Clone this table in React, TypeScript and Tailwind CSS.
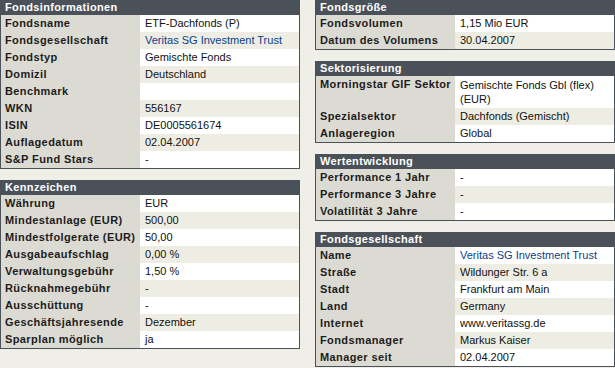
import React from "react";

type Row = { label: string; value: string; link?: boolean; tall?: boolean };

const fondsinfo: Row[] = [
  { label: "Fondsname", value: "ETF-Dachfonds (P)" },
  { label: "Fondsgesellschaft", value: "Veritas SG Investment Trust", link: true },
  { label: "Fondstyp", value: "Gemischte Fonds" },
  { label: "Domizil", value: "Deutschland" },
  { label: "Benchmark", value: "" },
  { label: "WKN", value: "556167" },
  { label: "ISIN", value: "DE0005561674" },
  { label: "Auflagedatum", value: "02.04.2007" },
  { label: "S&P Fund Stars", value: "-" },
];

const kennzeichen: Row[] = [
  { label: "Währung", value: "EUR" },
  { label: "Mindestanlage (EUR)", value: "500,00" },
  { label: "Mindestfolgerate (EUR)", value: "50,00" },
  { label: "Ausgabeaufschlag", value: "0,00 %" },
  { label: "Verwaltungsgebühr", value: "1,50 %" },
  { label: "Rücknahmegebühr", value: "-" },
  { label: "Ausschüttung", value: "-" },
  { label: "Geschäftsjahresende", value: "Dezember" },
  { label: "Sparplan möglich", value: "ja" },
];

const groesse: Row[] = [
  { label: "Fondsvolumen", value: "1,15 Mio EUR" },
  { label: "Datum des Volumens", value: "30.04.2007" },
];

const sektor: Row[] = [
  { label: "Morningstar GIF Sektor", value: "Gemischte Fonds Gbl (flex) (EUR)", tall: true },
  { label: "Spezialsektor", value: "Dachfonds (Gemischt)" },
  { label: "Anlageregion", value: "Global" },
];

const wertentwicklung: Row[] = [
  { label: "Performance 1 Jahr", value: "-" },
  { label: "Performance 3 Jahre", value: "-" },
  { label: "Volatilität 3 Jahre", value: "-" },
];

const gesellschaft: Row[] = [
  { label: "Name", value: "Veritas SG Investment Trust", link: true },
  { label: "Straße", value: "Wildunger Str. 6 a" },
  { label: "Stadt", value: "Frankfurt am Main" },
  { label: "Land", value: "Germany" },
  { label: "Internet", value: "www.veritassg.de" },
  { label: "Fondsmanager", value: "Markus Kaiser" },
  { label: "Manager seit", value: "02.04.2007" },
];

function Panel({ title, rows }: { title: string; rows: Row[] }) {
  return (
    <div className="w-[300px] border border-t-0 border-[#4a5159]">
      <div className="h-[15px] bg-[#4a5159] pl-1 text-[11px] font-bold leading-[15px] tracking-[0.35px] text-white">
        {title}
      </div>
      {rows.map((r, i) => (
        <div key={r.label} className={r.tall ? "flex h-[32px]" : "flex h-[17px]"}>
          <div className="w-[139px] shrink-0 bg-[#dcdbd3] pl-1 text-[11px] font-bold leading-[17px] tracking-[0.4px] text-[#1c1c1c]">
            {r.label}
          </div>
          <div
            className={
              (i % 2 ? "bg-[#eeede3] " : "bg-white ") +
              (r.tall ? "pt-[2px] leading-[14px] " : "leading-[17px] ") +
              (r.link ? "text-[#0b3f8c] " : "text-[#111] ") +
              "flex-1 pl-[5px] pr-1 text-[11px]"
            }
          >
            {r.value}
          </div>
        </div>
      ))}
    </div>
  );
}

export default function App() {
  return (
    <div className="flex h-[368px] w-[615px] items-start gap-[15px] overflow-hidden bg-[#efefe7] font-['Liberation_Sans',Arial,sans-serif]">
      <div className="flex flex-col gap-[11px]">
        <Panel title="Fondsinformationen" rows={fondsinfo} />
        <Panel title="Kennzeichen" rows={kennzeichen} />
      </div>
      <div className="flex flex-col gap-[11px]">
        <Panel title="Fondsgröße" rows={groesse} />
        <Panel title="Sektorisierung" rows={sektor} />
        <Panel title="Wertentwicklung" rows={wertentwicklung} />
        <Panel title="Fondsgesellschaft" rows={gesellschaft} />
      </div>
    </div>
  );
}
